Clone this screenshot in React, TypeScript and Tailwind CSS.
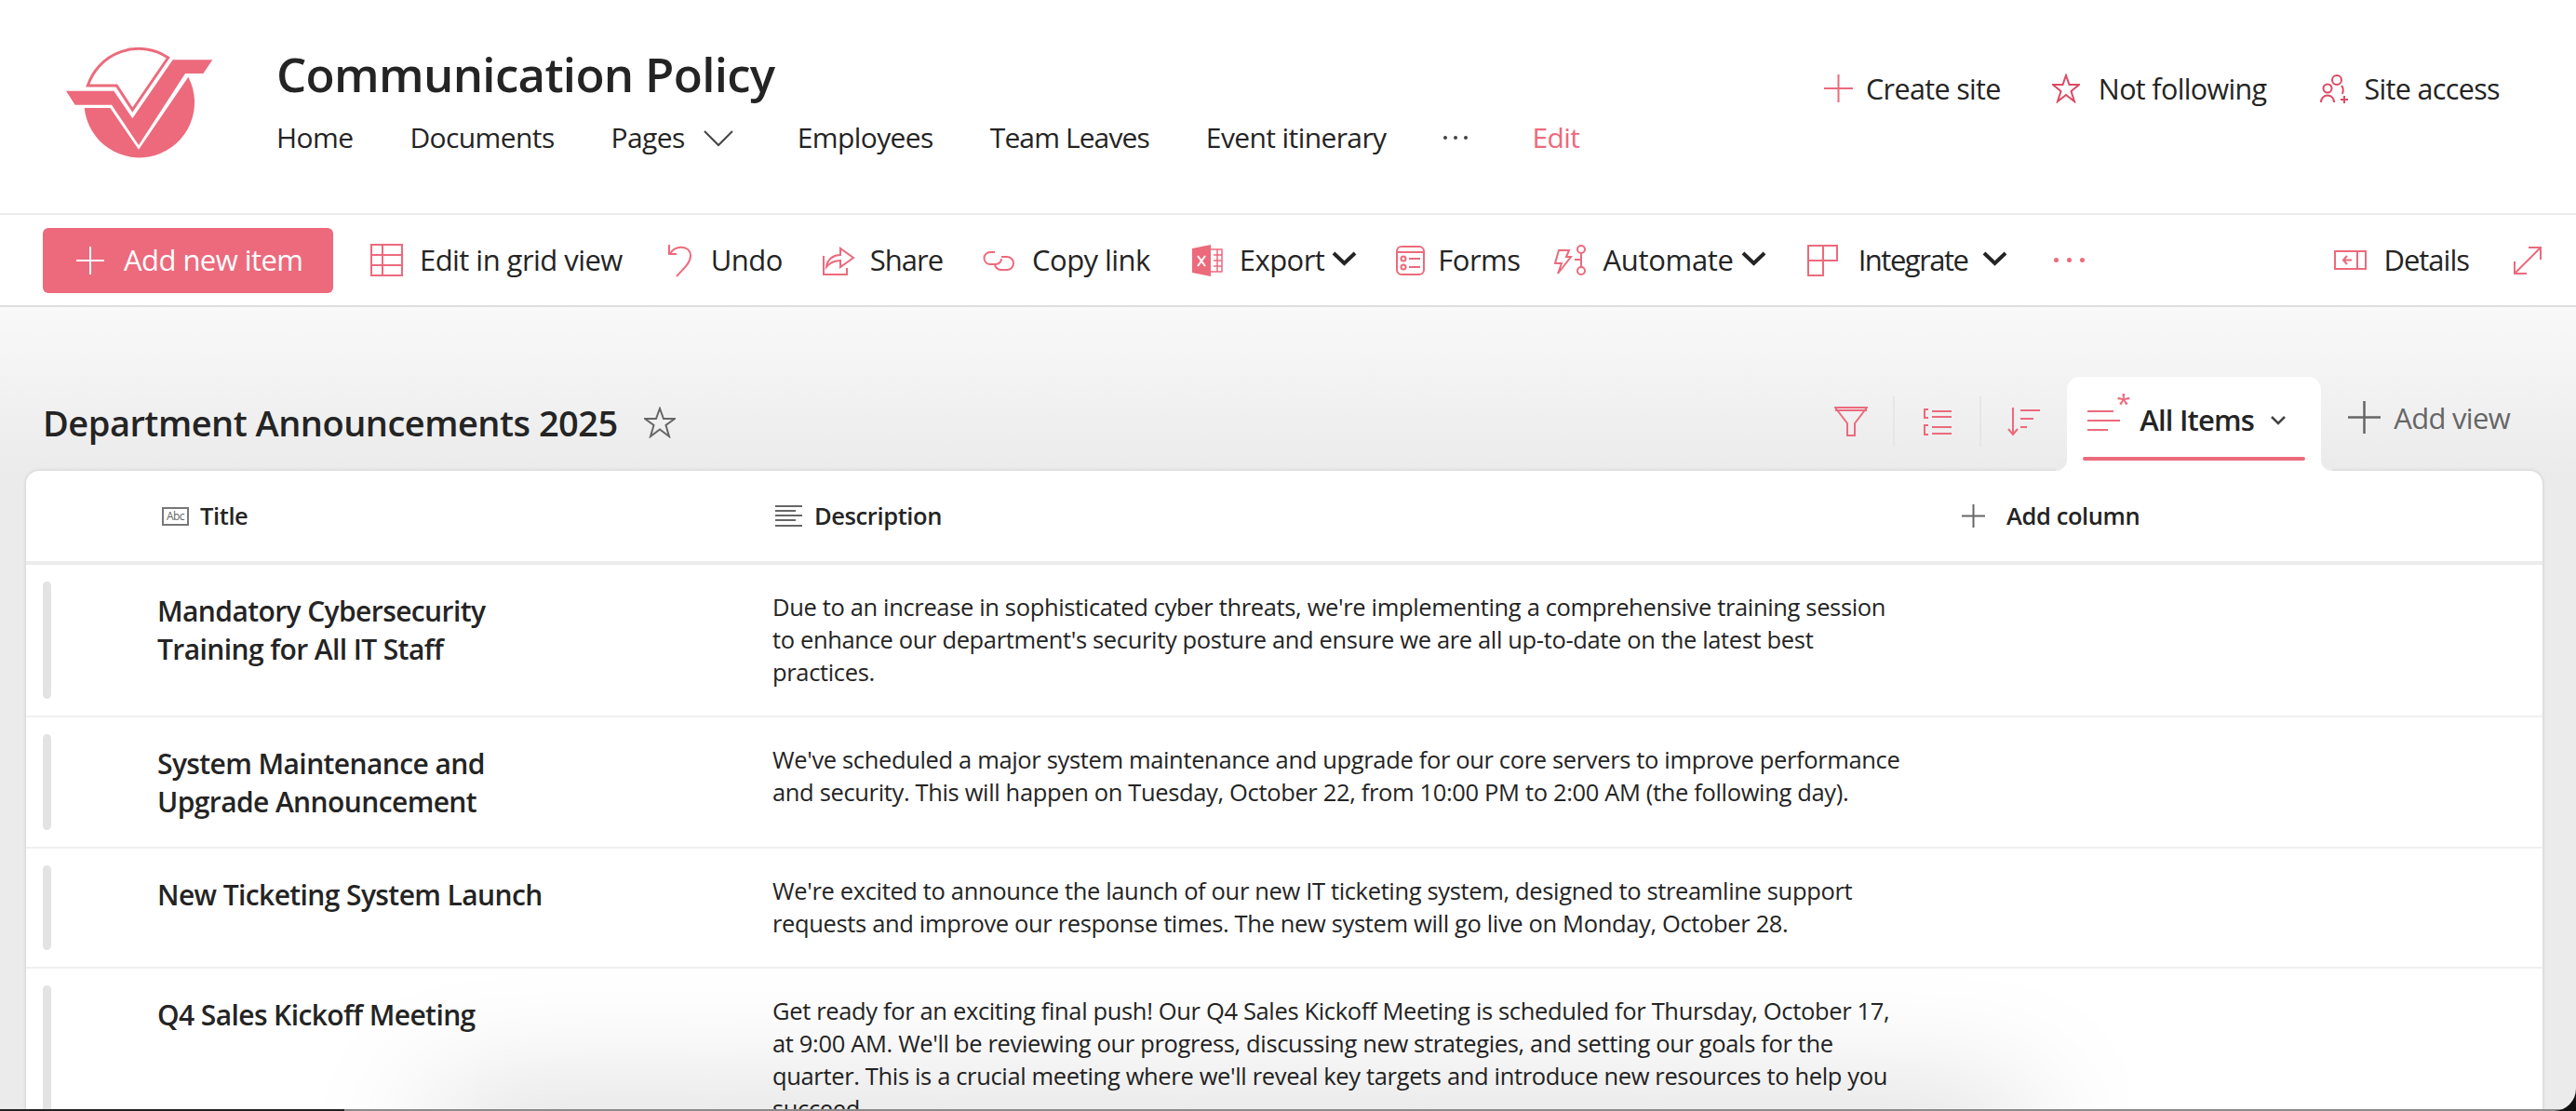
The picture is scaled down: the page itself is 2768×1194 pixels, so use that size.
import React from 'react';

const pink = '#ec6a7c';

const Logo = () => (
  <svg width="220" height="150" viewBox="0 0 660 450">
    <path d="M163 186 A172 172 0 0 1 422 96 L307 264 L256 186 Z" fill="none" stroke="#ec6a7c" strokeWidth="9" />
    <path d="M93 203 H247 L307 292 L437 103 H565 L535 147 H477 L327 378 L240 248 H122 Z" fill="#ec6a7c" />
    <path d="M152 258 H235 L327 392 L487 158 A178 178 0 1 1 152 258 Z" fill="#ec6a7c" />
  </svg>
);

const Ic = ({ children, w = 34, h = 34, c = pink }: { children: React.ReactNode; w?: number; h?: number; c?: string }) => (
  <svg width={w} height={h} viewBox={`0 0 ${w} ${h}`} fill="none" stroke={c} strokeWidth="2" className="shrink-0">
    {children}
  </svg>
);

const Caret = () => (
  <svg width="27" height="16" viewBox="0 0 27 16" fill="none" stroke="#242424" strokeWidth="4" className="shrink-0 mb-[3px]">
    <path d="M2 2 L13.5 13 L25 2" />
  </svg>
);

interface CmdProps {
  icon: React.ReactNode;
  label: string;
  caret?: boolean;
  className?: string;
  labelClass?: string;
}

const Cmd = ({ icon, label, caret, className = 'gap-[18px]', labelClass = 'gap-[8px]' }: CmdProps) => (
  <div className={`flex items-center ${className}`}>
    {icon}
    <span className={`flex items-center ${labelClass}`}>
      {label}
      {caret && <Caret />}
    </span>
  </div>
);

const rows = [
  {
    title: ['Mandatory Cybersecurity', 'Training for All IT Staff'],
    text: [
      "Due to an increase in sophisticated cyber threats, we're implementing a comprehensive training session",
      "to enhance our department's security posture and ensure we are all up-to-date on the latest best",
      'practices.',
    ],
  },
  {
    title: ['System Maintenance and', 'Upgrade Announcement'],
    text: [
      "We've scheduled a major system maintenance and upgrade for our core servers to improve performance",
      'and security. This will happen on Tuesday, October 22, from 10:00 PM to 2:00 AM (the following day).',
    ],
  },
  {
    title: ['New Ticketing System Launch'],
    text: [
      "We're excited to announce the launch of our new IT ticketing system, designed to streamline support",
      'requests and improve our response times. The new system will go live on Monday, October 28.',
    ],
  },
  {
    title: ['Q4 Sales Kickoff Meeting'],
    text: [
      'Get ready for an exciting final push! Our Q4 Sales Kickoff Meeting is scheduled for Thursday, October 17,',
      "at 9:00 AM. We'll be reviewing our progress, discussing new strategies, and setting our goals for the",
      "quarter. This is a crucial meeting where we'll reveal key targets and introduce new resources to help you",
      'succeed.',
    ],
  },
];

export default function App() {
  return (
    <div className="relative h-[1194px] w-[2768px] overflow-hidden bg-white font-['Open_Sans',sans-serif] text-[#242424] flex flex-col">
      {/* site header */}
      <header className="h-[231px] shrink-0 flex border-b-2 border-[#ebebeb]">
        <div className="pl-[40px] pt-[30px] w-[297px] shrink-0">
          <Logo />
        </div>
        <div className="flex-1 pt-[48px]">
          <h1 className="text-[51px] leading-[62px] font-semibold tracking-[-0.7px]">Communication Policy</h1>
          <nav className="mt-[18px] flex items-center text-[30px] leading-[40px] tracking-[-0.6px] gap-[61px]">
            <span>Home</span>
            <span>Documents</span>
            <span className="flex items-center gap-[19px] mr-[7px]">
              Pages
              <svg width="34" height="20" viewBox="0 0 34 20" fill="none" stroke="#444" strokeWidth="2">
                <path d="M2 3 L17 18 L32 3" />
              </svg>
            </span>
            <span>Employees</span>
            <span className="tracking-[-0.9px]">Team Leaves</span>
            <span>Event itinerary</span>
            <span className="flex items-center gap-[70px]">
              <span className="flex gap-[7px]">
                <i className="w-[4px] h-[4px] rounded-full bg-[#444]" />
                <i className="w-[4px] h-[4px] rounded-full bg-[#444]" />
                <i className="w-[4px] h-[4px] rounded-full bg-[#444]" />
              </span>
              <span className="text-[#ec6a7c]">Edit</span>
            </span>
          </nav>
        </div>
        <div className="pt-[75px] pr-[82px] flex items-start text-[30.5px] leading-[40px] tracking-[-0.65px]">
          <Cmd
            label="Create site"
            className="gap-[14px] mr-[55px]"
            icon={
              <Ic w={31} h={32}>
                <path d="M15.5 1 V31 M0 16 H31" />
              </Ic>
            }
          />
          <Cmd
            label="Not following"
            className="gap-[20px] mr-[57px]"
            icon={
              <Ic w={30} h={32} c="#dc4a64">
                <path d="M15 2 L18.5 12 L29 12 L20.5 19 L24 30 L15 23 L6 30 L9.5 19 L1 12 L11.5 12 Z" />
              </Ic>
            }
          />
          <Cmd
            label="Site access"
            className="gap-[16px]"
            icon={
              <Ic w={32} h={32} c="#dc4a64">
                <circle cx="19" cy="7" r="5" />
                <circle cx="9" cy="16" r="4.5" />
                <path d="M2 31 C2 21 16 21 16 31 M24 13 C26 15 26 19 25 22 M27 24 V32 M23 28 H31" />
              </Ic>
            }
          />
        </div>
      </header>

      {/* command bar */}
      <div className="h-[99px] shrink-0 flex items-center border-b-2 border-[#dedede] pl-[46px] pr-[36px] text-[31px] tracking-[-0.55px]">
        <div className="w-[312px] h-[70px] rounded-[6px] bg-[#ec6a7c] text-white flex items-center pl-[36px] gap-[21px] mr-[40px]">
          <svg width="30" height="30" viewBox="0 0 30 30" stroke="white" strokeWidth="2">
            <path d="M15 0 V30 M0 15 H30" />
          </svg>
          Add new item
        </div>
        <div className="flex items-center gap-[44px] flex-1">
          <Cmd
            label="Edit in grid view"
            icon={
              <Ic w={35} h={35}>
                <rect x="1" y="1" width="33" height="33" />
                <path d="M1 12 H34 M1 23 H34 M13 1 V34" />
              </Ic>
            }
          />
          <Cmd
            label="Undo"
            className="gap-[20px] ml-[4px]"
            icon={
              <Ic w={27} h={36}>
                <path d="M2 1 V11 H10 M3 11 C7 1 25 1 25 13 C25 21 16 28 10 35" />
              </Ic>
            }
          />
          <Cmd
            label="Share"
            className="gap-[16px] ml-[-2px]"
            labelClass="tracking-[-1px]"
            icon={
              <Ic w={36} h={34}>
                <path d="M2 12 V32 H27 V25 M5 24 C6 15 13 11 20 11 V4 L34 14 L20 24 V17 C14 17 9 19 5 24 Z" />
              </Ic>
            }
          />
          <Cmd
            label="Copy link"
            className="gap-[18px] ml-[-2px]"
            icon={
              <Ic w={36} h={24}>
                <path d="M14 3 H9 A6.5 6.5 0 0 0 9 16 H15 A6 6 0 0 0 21 10 M21 8 H27 A7 7 0 0 1 27 22 H20 A6.5 6.5 0 0 1 14 15" />
              </Ic>
            }
          />
          <Cmd
            label="Export"
            caret
            className="gap-[18px]"
            icon={
              <svg width="34" height="34" viewBox="0 0 34 34" className="shrink-0">
                <path d="M1 4 L21 0 V34 L1 30 Z" fill="#ec6a7c" />
                <path d="M21 5 H33 V29 H21 M24 11 H33 M24 17 H33 M24 23 H33 M28 5 V29" fill="none" stroke="#ec6a7c" strokeWidth="1.5" />
                <path d="M7 12 L15 23 M15 12 L7 23" stroke="white" strokeWidth="2" />
              </svg>
            }
          />
          <Cmd
            label="Forms"
            className="gap-[14px] ml-[-2px]"
            icon={
              <Ic w={31} h={32}>
                <rect x="1" y="1" width="29" height="30" rx="5" />
                <path d="M1 7 H30 M14 14 H26 M14 23 H26" />
                <circle cx="8" cy="14" r="2.5" />
                <circle cx="8" cy="23" r="2.5" />
              </Ic>
            }
          />
          <Cmd
            label="Automate"
            caret
            className="gap-[16px] ml-[-7px]"
            labelClass="gap-[8px] tracking-[-0.3px]"
            icon={
              <Ic w={36} h={33}>
                <path d="M5 6 H16 L13 13 H18 L4 31 L8 20 H1 Z" />
                <circle cx="29" cy="5" r="4" />
                <circle cx="29" cy="28" r="4" />
                <path d="M29 9 V24 M22 16 H29" />
              </Ic>
            }
          />
          <Cmd
            label="Integrate"
            caret
            className="gap-[22px]"
            labelClass="gap-[16px] tracking-[-1.5px]"
            icon={
              <Ic w={33} h={34}>
                <path d="M1 1 H32 V17 H17 V33 H1 Z M17 1 V17 M1 17 H17" />
              </Ic>
            }
          />
          <span className="flex gap-[9px] ml-[6px]">
            <i className="w-[5px] h-[5px] rounded-full bg-[#ec6a7c]" />
            <i className="w-[5px] h-[5px] rounded-full bg-[#ec6a7c]" />
            <i className="w-[5px] h-[5px] rounded-full bg-[#ec6a7c]" />
          </span>
        </div>
        <div className="flex items-center gap-[47px]">
          <Cmd
            label="Details"
            labelClass="tracking-[-1px]"
            icon={
              <Ic w={35} h={21}>
                <rect x="1" y="1" width="33" height="19" />
                <path d="M25 1 V20 M19 10.5 H10 M14 6 L10 10.5 L14 15" />
              </Ic>
            }
          />
          <Ic w={32} h={32}>
            <path d="M2 30 L30 2 M17 2 H30 V15 M2 17 V30 H15" />
          </Ic>
        </div>
      </div>

      {/* list area */}
      <main className="flex-1 min-h-0 bg-[linear-gradient(#f9f9f9,#ebebeb_176px)] flex flex-col">
        <div className="h-[176px] shrink-0 flex items-end justify-between pl-[46px] pr-[71px]">
          <div className="flex items-center gap-[28px] pb-[28px]">
            <h2 className="text-[38px] leading-[48px] font-semibold tracking-[-0.5px]">Department Announcements 2025</h2>
            <svg width="34" height="34" viewBox="0 0 34 34" fill="none" stroke="#666" strokeWidth="2">
              <path d="M17 2 L21 13 L33 13 L23.5 20 L27 32 L17 24.5 L7 32 L10.5 20 L1 13 L13 13 Z" />
            </svg>
          </div>
          <div className="flex items-end">
            <div className="flex items-center h-[54px] mb-[26px] mr-[28px]">
              <Ic w={36} h={32}>
                <path d="M1 1 H35 L22 18 V31 H14 V18 Z M1 4 H35" />
              </Ic>
              <i className="w-[2px] h-[54px] bg-[#e6e6e6] ml-[27px] mr-[30px]" />
              <Ic w={31} h={31}>
                <path d="M6 2 H2 V11 H6 M10 4 H31 M10 10 H31 M6 19 H2 V29 H6 M10 21 H31 M10 28 H31" />
              </Ic>
              <i className="w-[2px] h-[54px] bg-[#e6e6e6] ml-[30px] mr-[28px]" />
              <Ic w={36} h={32}>
                <path d="M6 1 V30 M1 24 L6 30 L11 24 M14 4 H35 M14 13 H28 M14 22 H21" />
              </Ic>
            </div>
            <div className="relative z-10 w-[273px] h-[102px] mb-[-1px] bg-white rounded-t-[14px]">
              <div className="absolute left-[-12px] bottom-[1px] w-[12px] h-[12px] bg-white">
                <div className="w-full h-full bg-[#ebebeb] rounded-br-[12px]" />
              </div>
              <div className="absolute right-[-12px] bottom-[1px] w-[12px] h-[12px] bg-white">
                <div className="w-full h-full bg-[#ebebeb] rounded-bl-[12px]" />
              </div>
              <div className="flex items-center h-[70px] pt-[23px] pl-[22px] relative">
                <Ic w={35} h={24}>
                  <path d="M0 2 H28 M0 12 H35 M0 22 H22" />
                </Ic>
                <span className="absolute left-[53px] top-[14px] text-[28px] leading-[28px] text-[#ec6a7c]">*</span>
                <span className="ml-[21px] text-[31px] font-semibold tracking-[-0.8px]">All Items</span>
                <svg width="16" height="10" viewBox="0 0 16 10" fill="none" stroke="#444" strokeWidth="2.5" className="ml-[18px]">
                  <path d="M1 1 L8 8 L15 1" />
                </svg>
              </div>
              <div className="absolute left-[17px] right-[17px] top-[86px] h-[4px] rounded-full bg-[#ec6a7c]" />
            </div>
            <div className="flex items-center gap-[14px] text-[31px] tracking-[-0.7px] text-[#666] ml-[29px] mb-[34px]">
              <svg width="35" height="35" viewBox="0 0 35 35" fill="none" stroke="#666" strokeWidth="2.5">
                <path d="M17.5 0 V35 M0 17.5 H35" />
              </svg>
              Add view
            </div>
          </div>
        </div>

        <section className="flex-1 ml-[28px] mr-[36px] bg-white rounded-t-[14px] shadow-[0_0_4px_rgba(0,0,0,0.15)] relative">
          <div className="h-[101px] flex items-center border-b-4 border-[#ececec] pl-[146px] text-[25.5px] font-semibold tracking-[-0.4px]">
            <div className="w-[659px] flex items-center gap-[12px]">
              <span className="w-[29px] h-[20px] border-2 border-[#777] text-[12px] leading-[16px] font-normal text-[#666] text-center tracking-[-0.5px]">Abc</span>
              Title
            </div>
            <div className="w-[1275px] flex items-center gap-[12px]">
              <svg width="30" height="23" viewBox="0 0 30 23" fill="none" stroke="#666" strokeWidth="2">
                <path d="M0 1 H29 M0 6 H22 M0 11 H29 M0 16 H22 M0 22 H29" />
              </svg>
              Description
            </div>
            <div className="flex items-center gap-[23px]">
              <svg width="25" height="25" viewBox="0 0 25 25" fill="none" stroke="#666" strokeWidth="2">
                <path d="M12.5 0 V25 M0 12.5 H25" />
              </svg>
              Add column
            </div>
          </div>
          {rows.map((row) => (
            <div key={row.title[0]} className="flex border-b-2 border-[#f0f0f0] pl-[18px] py-[18px]">
              <i className="w-[9px] shrink-0 rounded-full bg-[#e3e3e3]" />
              <div className="w-[775px] shrink-0 pl-[114px] pt-[11px] pb-[10px] text-[30px] leading-[41px] font-semibold tracking-[-0.6px] whitespace-nowrap">
                {row.title.map((line) => (
                  <div key={line}>{line}</div>
                ))}
              </div>
              <div className="pt-[10px] pb-[11px] text-[25.5px] leading-[35px] tracking-[-0.35px] whitespace-nowrap">
                {row.text.map((line) => (
                  <div key={line}>{line}</div>
                ))}
              </div>
            </div>
          ))}
        </section>
      </main>

      {/* window edge + dock shadow */}
      <div className="absolute left-[470px] w-[1705px] bottom-[-60px] h-[60px] shadow-[0_0_140px_rgba(0,0,0,0.25)]" />
      <div className="absolute left-0 right-0 bottom-0 h-[2px] bg-[#8a8a8a]" />
      <div className="absolute left-0 w-[370px] bottom-0 h-[2px] bg-[#222222]" />
      <svg width="24" height="24" viewBox="0 0 24 24" className="absolute right-0 bottom-0">
        <path d="M24 0 V24 H0 A24 24 0 0 0 24 0 Z" fill="#111111" />
      </svg>
    </div>
  );
}
